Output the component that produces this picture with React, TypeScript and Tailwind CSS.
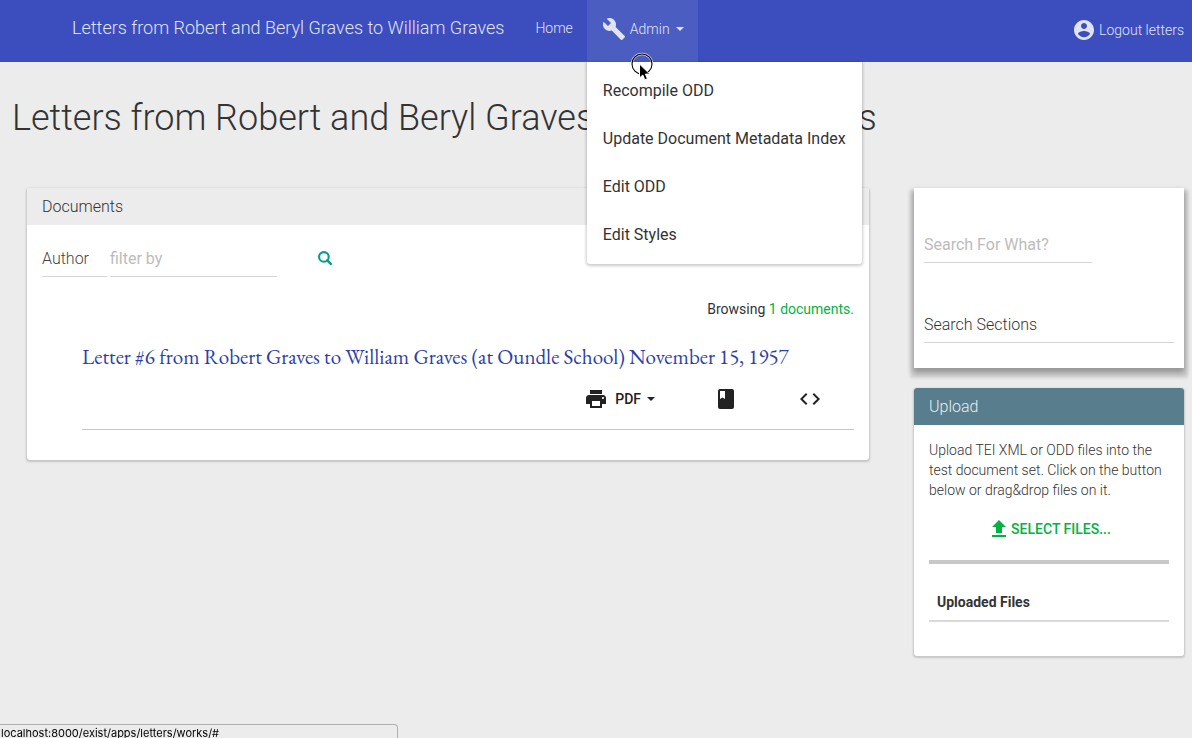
import React from "react";

type IconProps = { d: string; className?: string };

function Icon({ d, className = "size-6" }: IconProps) {
  return (
    <svg viewBox="0 0 24 24" fill="currentColor" className={`${className} shrink-0`} aria-hidden="true">
      <path d={d} />
    </svg>
  );
}

function Caret() {
  return (
    <svg viewBox="0 0 8 4" fill="currentColor" className="h-1 w-2 shrink-0" aria-hidden="true">
      <path d="M0 0h8L4 4z" />
    </svg>
  );
}

const icons = {
  build:
    "M22.7 19l-9.1-9.1c.9-2.3.4-5-1.5-6.9-2-2-5-2.4-7.4-1.3L9 6 6 9 1.6 4.7C.4 7.1.9 10.1 2.9 12.1c1.9 1.9 4.6 2.4 6.9 1.5l9.1 9.1c.4.4 1 .4 1.4 0l2.3-2.3c.5-.4.5-1.1.1-1.4z",
  account:
    "M12 2C6.48 2 2 6.48 2 12s4.48 10 10 10 10-4.48 10-10S17.52 2 12 2zm0 3c1.66 0 3 1.34 3 3s-1.34 3-3 3-3-1.34-3-3 1.34-3 3-3zm0 14.2c-2.5 0-4.71-1.28-6-3.22.03-1.99 4-3.08 6-3.08 1.99 0 5.97 1.09 6 3.08-1.29 1.94-3.5 3.22-6 3.22z",
  print:
    "M19 8H5c-1.66 0-3 1.34-3 3v6h4v4h12v-4h4v-6c0-1.66-1.34-3-3-3zm-3 11H8v-5h8v5zm3-7c-.55 0-1-.45-1-1s.45-1 1-1 1 .45 1 1-.45 1-1 1zm-1-9H6v4h12V3z",
  book:
    "M18 2H6c-1.1 0-2 .9-2 2v16c0 1.1.9 2 2 2h12c1.1 0 2-.9 2-2V4c0-1.1-.9-2-2-2zM6 4h5v8l-2.5-1.5L6 12V4z",
  code:
    "M9.4 16.6L4.8 12l4.6-4.6L8 6l-6 6 6 6 1.4-1.4zm5.2 0l4.6-4.6-4.6-4.6L16 6l6 6-6 6-1.4-1.4z",
  upload: "M9 16h6v-6h4l-7-7-7 7h4zm-4 2h14v2H5z",
};

const adminItems = ["Recompile ODD", "Update Document Metadata Index", "Edit ODD", "Edit Styles"];

function Pointer() {
  return (
    <svg viewBox="0 0 24 30" className="absolute -bottom-5 left-[43px] h-[30px] w-6" aria-hidden="true">
      <circle cx="12" cy="12" r="10" fill="none" stroke="#fff" strokeWidth="2.4" opacity=".7" />
      <circle cx="12" cy="12" r="10" fill="none" stroke="#000" strokeWidth="1.1" />
      <path
        d="M9.5 12v14l3.3-3 2 4.8 2.6-1.1-2-4.6h4.4z"
        fill="#000"
        stroke="#fff"
        strokeWidth="1"
      />
    </svg>
  );
}

function Navbar() {
  return (
    <header className="flex h-[62px] items-stretch bg-[#3c4ebd] pr-2 pl-[72px] text-[#e0e3f5]">
      <a href="#" className="mt-[17px] text-lg leading-[22px] font-light whitespace-nowrap">
        Letters from Robert and Beryl Graves to William Graves
      </a>
      <nav className="ml-[31px] flex">
        <a href="#" className="mt-[18px] text-sm leading-5 font-light">
          Home
        </a>
        <div className="relative ml-[14px] flex">
          <button type="button" className="flex w-[111px] items-center bg-[#4b5dc1] pb-1 pl-[15px] text-sm font-light">
            <Icon d={icons.build} />
            <span className="mr-[6px] ml-1">Admin</span>
            <Caret />
          </button>
          <ul className="absolute top-full left-0 z-10 w-[275px] rounded-b-[3px] bg-white pt-[5px] pb-[5px] text-[#333] shadow-[0_1px_3px_1px_rgba(0,0,0,0.2)]">
            {adminItems.map((item) => (
              <li key={item}>
                <a href="#" className="block px-4 py-3 leading-6 whitespace-nowrap">
                  {item}
                </a>
              </li>
            ))}
          </ul>
          <div className="absolute inset-x-0 bottom-0 z-20">
            <Pointer />
          </div>
        </div>
      </nav>
      <a href="#" className="ml-auto flex items-center pb-[3px] text-sm font-light">
        <Icon d={icons.account} />
        <span className="ml-[3px]">Logout letters</span>
      </a>
    </header>
  );
}

function Documents() {
  return (
    <section className="min-w-0 flex-1 rounded-[3px] bg-white shadow-[0_1px_2px_1px_rgba(0,0,0,0.17)]">
      <h2 className="rounded-t-[3px] bg-[#ececec] px-[15px] pt-[9px] pb-2 leading-5 font-light">Documents</h2>
      <div className="px-[15px] pt-[15px] pb-[30px]">
        <form className="flex">
          <select
            aria-label="Filter field"
            className="h-[37px] w-[65px] appearance-none border-b border-[#d4d4d4] bg-transparent pt-px font-light text-[#444] outline-none"
          >
            <option>Author</option>
          </select>
          <input
            aria-label="Filter by"
            placeholder="filter by"
            className="ml-[3px] h-[37px] w-[167px] border-b border-[#d4d4d4] outline-none placeholder:text-[#bcbcbc]"
          />
          <button type="button" aria-label="Search" className="ml-[41px] flex h-[35px] items-center text-[#009f8b]">
            <svg viewBox="0 0 14 14" className="size-[14px]" fill="none" stroke="currentColor" aria-hidden="true">
              <circle cx="5.9" cy="5.9" r="4.8" strokeWidth="2.1" />
              <path d="M9.3 9.3l3.5 3.5" strokeWidth="2.4" strokeLinecap="round" />
            </svg>
          </button>
        </form>
        <p className="mt-[22px] text-right text-sm leading-5">
          Browsing <span className="text-[#00b344]">1 documents.</span>
        </p>
        <article className="ml-10 border-b border-[#c6c6c6] pt-[25px] pb-[18px]">
          <h3 className='font-["EB_Garamond","Liberation_Serif",serif] text-[21px] leading-[26px] text-[#2d3fa8]'>
            <a href="#">
              Letter #6 from Robert Graves to William Graves (at Oundle School) November 15, 1957
            </a>
          </h3>
          <div className="mt-[17px] flex h-6 items-center justify-end pr-8 text-[#222]">
            <button type="button" className="flex items-center text-sm font-medium">
              <Icon d={icons.print} />
              <span className="mr-[6px] ml-[7px]">PDF</span>
              <Caret />
            </button>
            <button type="button" aria-label="E-book" className="ml-[59px]">
              <Icon d={icons.book} />
            </button>
            <button type="button" aria-label="View source" className="ml-[60px]">
              <Icon d={icons.code} />
            </button>
          </div>
        </article>
      </div>
    </section>
  );
}

function SearchPanel() {
  return (
    <form className="bg-white px-[10px] pt-[38px] pb-[25px] shadow-[0_4px_6px_1px_rgba(0,0,0,0.3),0_6px_3px_4px_rgba(0,0,0,0.1)]">
      <input
        aria-label="Search text"
        placeholder="Search For What?"
        className="block h-[37px] w-[168px] border-b border-[#d4d4d4] outline-none placeholder:text-[#bcbcbc]"
      />
      <select
        aria-label="Search scope"
        className="mt-[43px] block h-[37px] w-full appearance-none border-b border-[#d4d4d4] bg-transparent pt-px font-light text-[#333] outline-none"
      >
        <option>Search Sections</option>
      </select>
    </form>
  );
}

function UploadPanel() {
  return (
    <section className="relative mt-5 rounded-[3px] bg-white shadow-[0_1px_2px_1px_rgba(0,0,0,0.17)]">
      <h2 className="rounded-t-[3px] bg-[#587d8d] px-[15px] pt-[9px] pb-2 leading-5 font-light text-[#e8eef0]">
        Upload
      </h2>
      <div className="px-[15px] pt-[15px] pb-[34px]">
        <p className="text-sm leading-5 font-light">
          Upload TEI XML or ODD files into the test document set. Click on the button below or drag&amp;drop files on
          it.
        </p>
        <button
          type="button"
          className="mt-[17px] flex w-full items-center justify-center text-sm font-medium text-[#00b344]"
        >
          <Icon d={icons.upload} />
          <span>SELECT FILES...</span>
        </button>
        <div className="mt-[19px] h-1 bg-[#c8c8c8]" />
        <table className="mt-5 w-full">
          <thead>
            <tr className="border-b-2 border-[#d9d9d9]">
              <th className="px-2 py-2 text-left text-sm leading-5 font-bold">Uploaded Files</th>
            </tr>
          </thead>
        </table>
      </div>
    </section>
  );
}

export default function App() {
  return (
    <div className='min-h-screen bg-[#ececec] font-["Roboto",sans-serif] text-[#333]'>
      <Navbar />
      <main className="pt-9 pr-2 pl-3">
        <h1 className="text-4xl leading-10 font-light">Letters from Robert and Beryl Graves to William Graves</h1>
        <div className="mt-[50px] flex items-start gap-[45px] pl-[15px]">
          <Documents />
          <aside className="w-[270px] shrink-0">
            <SearchPanel />
            <UploadPanel />
          </aside>
        </div>
      </main>
      <div className='fixed bottom-0 left-0 h-[14px] w-[398px] rounded-tr-[4px] border-t border-r border-[#b0b0b0] bg-[#ececec] pl-px font-["Inter",sans-serif] text-[11px] leading-4 text-black'>
        localhost:8000/exist/apps/letters/works/#
      </div>
    </div>
  );
}
